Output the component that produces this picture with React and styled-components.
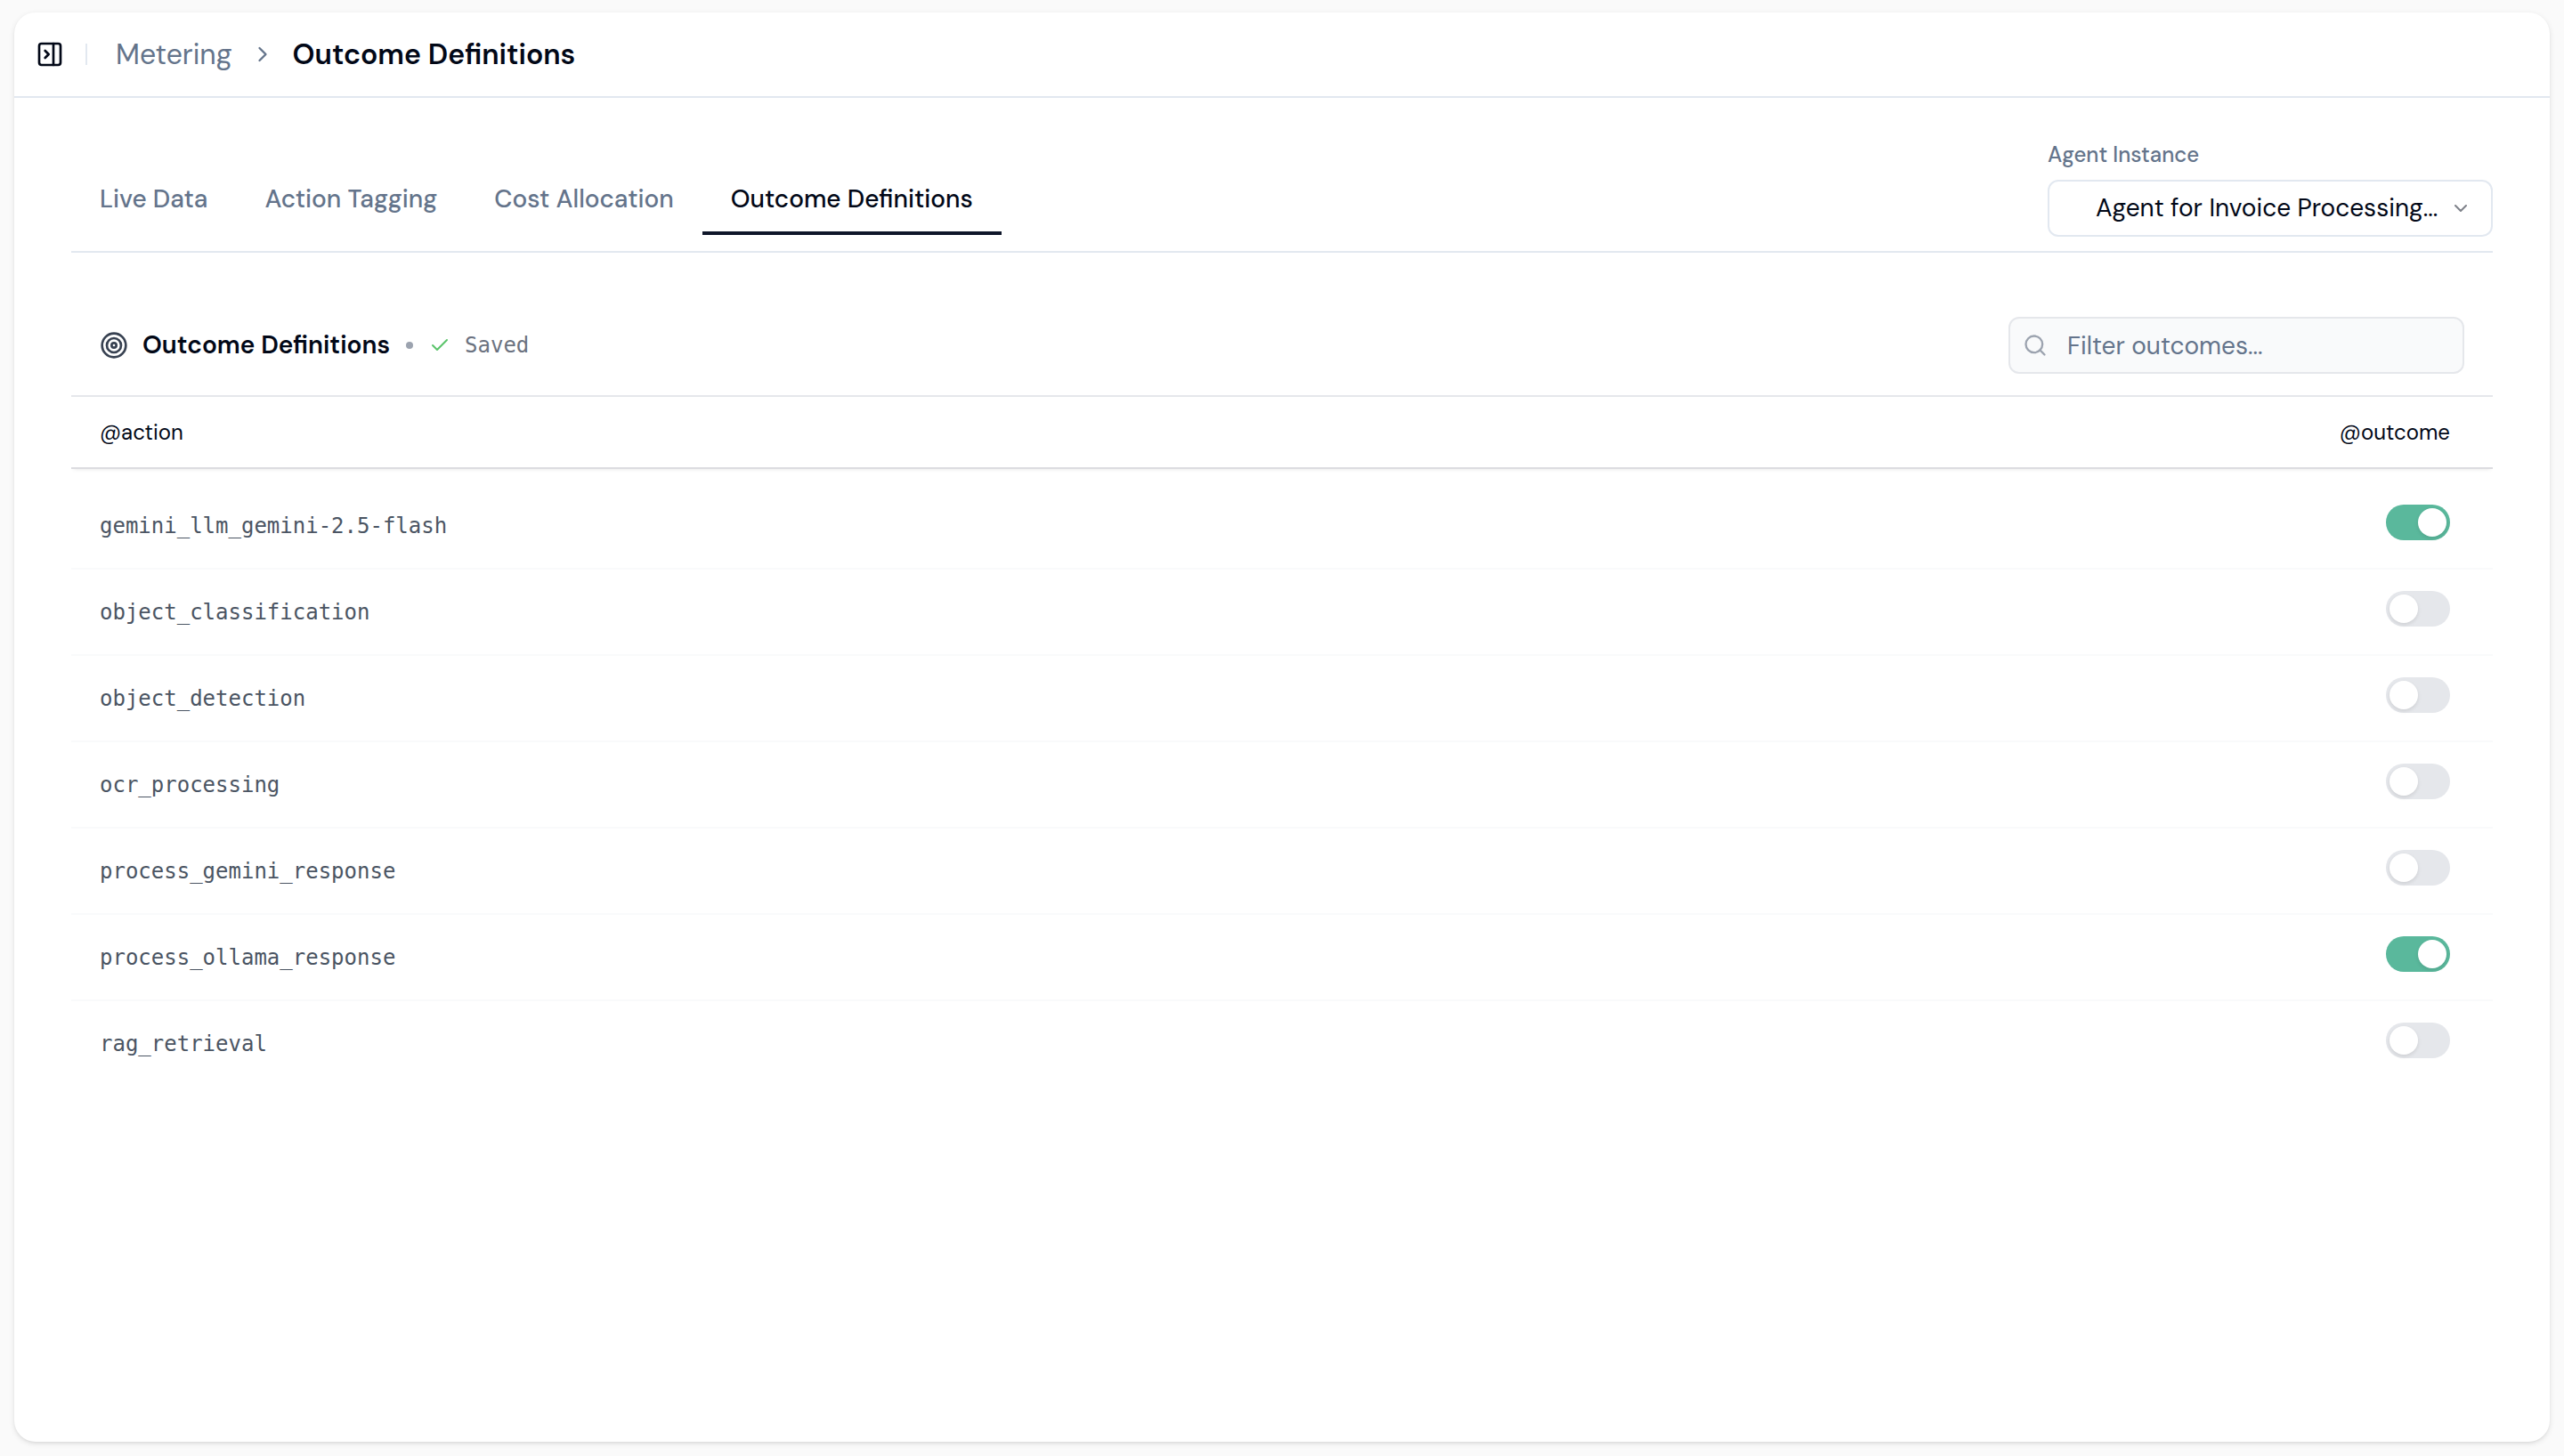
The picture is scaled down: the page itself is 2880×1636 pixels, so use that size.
import React, { useState } from 'react';
import styled, { createGlobalStyle, css } from 'styled-components';
import {
  Check,
  ChevronDown,
  ChevronRight,
  PanelRightClose,
  Search,
  Target,
} from 'lucide-react';

const tabs = ['Live Data', 'Action Tagging', 'Cost Allocation', 'Outcome Definitions'];

const actions = [
  { name: 'gemini_llm_gemini-2.5-flash', outcome: true },
  { name: 'object_classification', outcome: false },
  { name: 'object_detection', outcome: false },
  { name: 'ocr_processing', outcome: false },
  { name: 'process_gemini_response', outcome: false },
  { name: 'process_ollama_response', outcome: true },
  { name: 'rag_retrieval', outcome: false },
];

const GlobalStyle = createGlobalStyle`
  *, *::before, *::after {
    box-sizing: border-box;
  }

  body {
    margin: 0;
    background: #fafafa;
    color: #020817;
    font-family: "DM Sans", Inter, sans-serif;
    font-size: 28px;
    line-height: 40px;
  }

  button, input, select {
    margin: 0;
    color: inherit;
    font: inherit;
  }

  svg {
    display: block;
    flex-shrink: 0;
  }
`;

const Page = styled.div`
  display: flex;
  min-height: 100vh;
  padding: 14px 16px 16px;
`;

const Panel = styled.main`
  flex: 1;
  min-width: 0;
  border-radius: 24px;
  background: #fff;
  box-shadow: 0 2px 6px rgba(0, 0, 0, 0.1), 0 2px 4px -2px rgba(0, 0, 0, 0.1);
`;

const TopBar = styled.header`
  display: flex;
  align-items: center;
  height: 96px;
  padding: 0 24px;
  border-bottom: 2px solid #e2e8f0;
`;

const SidebarButton = styled.button`
  display: flex;
  padding: 0;
  border: 0;
  background: none;
`;

const Separator = styled.div`
  width: 2px;
  height: 24px;
  margin: 0 32px 0 24px;
  background: #e2e8f0;
`;

const Breadcrumbs = styled.nav`
  display: flex;
  align-items: center;
  gap: 20px;
  color: #64748b;
  font-size: 32px;
`;

const BreadcrumbLink = styled.a`
  color: inherit;
  text-decoration: none;
`;

const BreadcrumbPage = styled.span`
  color: #020817;
  font-weight: 600;
`;

const Content = styled.div`
  padding: 44px 64px;
`;

const TabBar = styled.div`
  display: flex;
  align-items: flex-end;
  justify-content: space-between;
  padding-bottom: 16px;
  border-bottom: 2px solid #e2e8f0;
`;

const Tabs = styled.nav`
  display: flex;
  margin-bottom: 2px;
`;

const Tab = styled.a`
  ${({ $active }) => css`
    padding: 0 32px 16px;
    border-bottom: 4px solid ${$active ? '#0f172a' : 'transparent'};
    color: ${$active ? '#020817' : '#64748b'};
    font-weight: 500;
    text-decoration: none;
    white-space: nowrap;
  `}
`;

const Field = styled.div`
  display: flex;
  flex-direction: column;
  gap: 8px;
  width: 500px;
`;

const FieldLabel = styled.label`
  color: #64748b;
  font-size: 24px;
  font-weight: 500;
`;

const SelectBox = styled.div`
  position: relative;
`;

const Select = styled.select`
  width: 100%;
  height: 64px;
  padding: 0 56px 0 52px;
  border: 2px solid #e2e8f0;
  border-radius: 12px;
  background: #fff;
  appearance: none;
`;

const SelectArrow = styled(ChevronDown)`
  position: absolute;
  top: 20px;
  right: 24px;
  opacity: 0.5;
  pointer-events: none;
`;

const SectionBar = styled.div`
  display: flex;
  align-items: center;
  justify-content: space-between;
  padding: 72px 32px 24px;
  border-bottom: 2px solid #e5e7eb;
`;

const SectionHeading = styled.div`
  display: flex;
  align-items: center;
  gap: 18px;
`;

const SectionTitle = styled.h2`
  display: flex;
  align-items: center;
  gap: 16px;
  margin: 0;
  font-size: 28px;
  font-weight: 600;
`;

const Dot = styled.span`
  width: 8px;
  height: 8px;
  border-radius: 50%;
  background: #9ca3af;
`;

const SaveState = styled.span`
  display: flex;
  align-items: center;
  gap: 16px;
  color: #6b7280;
  font-family: Menlo, "DejaVu Sans Mono", monospace;
  font-size: 24px;
`;

const FilterBox = styled.div`
  position: relative;
  width: 512px;
`;

const FilterIcon = styled(Search)`
  position: absolute;
  top: 18px;
  left: 16px;
  color: #9ca3af;
`;

const FilterInput = styled.input`
  display: block;
  width: 100%;
  height: 64px;
  padding: 0 24px 0 64px;
  border: 2px solid #e5e7eb;
  border-radius: 12px;
  background: #f9fafb;

  &::placeholder {
    color: #64748b;
    opacity: 1;
  }
`;

const Table = styled.table`
  width: 100%;
  border-spacing: 0;
`;

const TableHead = styled.thead`
  box-shadow: 0 4px 4px -3px rgba(0, 0, 0, 0.08);
`;

const TableBody = styled.tbody`
  &::before {
    content: "";
    display: block;
    height: 16px;
  }
`;

const HeadCell = styled.th`
  height: 81px;
  padding: 0 48px 0 32px;
  border-bottom: 2px solid #dcdce0;
  font-size: 24px;
  font-weight: 400;
  text-align: ${({ $align }) => $align || 'left'};
`;

const Cell = styled.td`
  height: 97px;
  padding: 0 32px;
  border-bottom: 2px solid #f9fafb;

  tr:last-child & {
    border-bottom-color: transparent;
  }
`;

const ActionName = styled.label`
  color: #4b5563;
  font-family: Menlo, "DejaVu Sans Mono", monospace;
  font-size: 24px;
`;

const ToggleCell = styled(Cell)`
  padding: 24px 48px 0 0;
  vertical-align: top;
`;

const Toggle = styled.input`
  display: block;
  width: 72px;
  height: 40px;
  margin-left: auto;
  padding: 4px;
  border-radius: 20px;
  background: #e5e7eb;
  appearance: none;

  &::before {
    content: "";
    display: block;
    width: 32px;
    height: 32px;
    border-radius: 50%;
    background: #fff;
    box-shadow: 0 2px 4px rgba(0, 0, 0, 0.1);
  }

  &:checked {
    background: #5ab89c;
  }

  &:checked::before {
    margin-left: 32px;
  }
`;

const App = () => {
  const [filter, setFilter] = useState('');
  const [rows, setRows] = useState(actions);

  const toggle = (name) => setRows(rows.map((row) => (
    row.name === name ? { ...row, outcome: !row.outcome } : row
  )));

  return (
    <Page>
      <GlobalStyle />

      <Panel>
        <TopBar>
          <SidebarButton type="button" aria-label="Toggle sidebar">
            <PanelRightClose size={32} />
          </SidebarButton>

          <Separator />

          <Breadcrumbs>
            <BreadcrumbLink href="#metering">Metering</BreadcrumbLink>
            <ChevronRight size={28} />
            <BreadcrumbPage>Outcome Definitions</BreadcrumbPage>
          </Breadcrumbs>
        </TopBar>

        <Content>
          <TabBar>
            <Tabs>
              {tabs.map((tab) => (
                <Tab key={tab} href="#tab" $active={tab === 'Outcome Definitions'}>
                  {tab}
                </Tab>
              ))}
            </Tabs>

            <Field>
              <FieldLabel htmlFor="agent">Agent Instance</FieldLabel>

              <SelectBox>
                <Select id="agent">
                  <option>Agent for Invoice Processing...</option>
                </Select>
                <SelectArrow size={24} />
              </SelectBox>
            </Field>
          </TabBar>

          <SectionBar>
            <SectionHeading>
              <SectionTitle>
                <Target size={32} color="#374151" />
                Outcome Definitions
              </SectionTitle>
              <Dot />
              <SaveState>
                <Check size={24} color="#5bc46b" strokeWidth={2} />
                Saved
              </SaveState>
            </SectionHeading>

            <FilterBox>
              <FilterIcon size={28} />
              <FilterInput
                type="text"
                aria-label="Filter outcomes"
                placeholder="Filter outcomes..."
                value={filter}
                onChange={(event) => setFilter(event.target.value)}
              />
            </FilterBox>
          </SectionBar>

          <Table>
            <TableHead>
              <tr>
                <HeadCell>@action</HeadCell>
                <HeadCell $align="right">@outcome</HeadCell>
              </tr>
            </TableHead>

            <TableBody>
              {rows.filter(({ name }) => name.includes(filter)).map(({ name, outcome }) => (
                <tr key={name}>
                  <Cell>
                    <ActionName htmlFor={name}>{name}</ActionName>
                  </Cell>
                  <ToggleCell>
                    <Toggle
                      id={name}
                      type="checkbox"
                      checked={outcome}
                      onChange={() => toggle(name)}
                    />
                  </ToggleCell>
                </tr>
              ))}
            </TableBody>
          </Table>
        </Content>
      </Panel>
    </Page>
  );
};

export default App;
